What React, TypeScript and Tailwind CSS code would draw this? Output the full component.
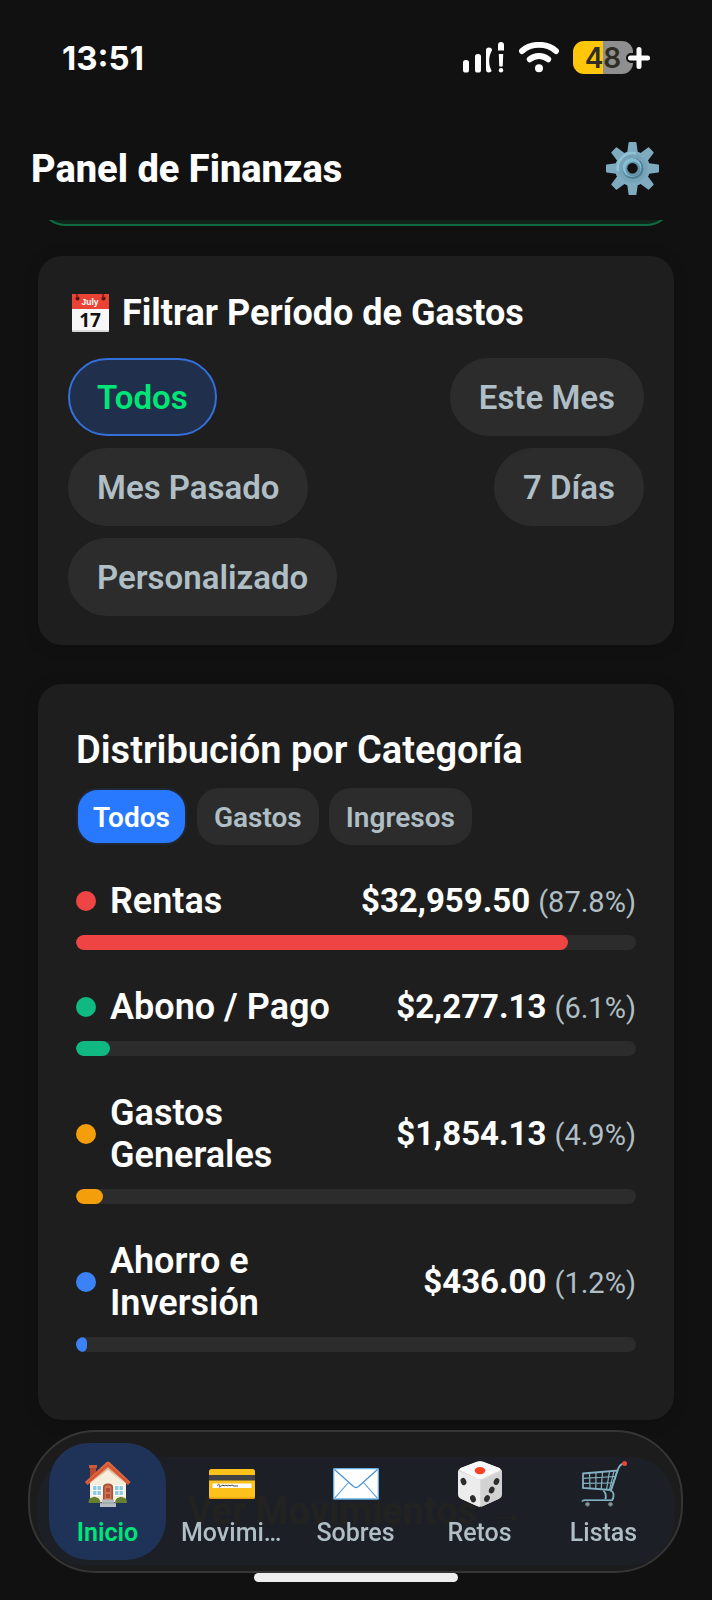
import React, { useState } from "react";

function SignalIcon() {
  return (
    <svg width="42" height="31" viewBox="0 0 42 31" fill="#fff" aria-hidden="true">
      <rect x="0" y="18" width="6" height="12.5" rx="2.6" />
      <rect x="12" y="12" width="6" height="18.5" rx="2.6" />
      <path d="M26 5.5c2 0 3 1.200 3 2.800-1.800 3.200-2.800 6.500-2.800 10.200 0 4 .6 7 2.400 10.300-.4 1-1.300 1.700-2.600 1.700-2 0-3-1-3-2.700V8.200c0-1.700 1-2.700 3-2.700z" />
      <path d="M35 3c0-2 1.200-3 3-3s3 1 3 3v5.500h-6z" />
      <path d="M35.800 12h4.400l-.4 11.500c0 .8-.8 1.200-1.800 1.200s-1.800-.4-1.800-1.200z" />
      <circle cx="38" cy="28.300" r="2.200" />
    </svg>
  );
}

function WifiIcon() {
  return (
    <svg width="40" height="31" viewBox="0 0 40 31" fill="none" stroke="#fff" strokeWidth="6" strokeLinecap="round" aria-hidden="true">
      <path d="M3 9C12.500.800 27.500.800 37 9" />
      <path d="M10.800 17.200C16 12.800 24 12.800 29.200 17.200" />
      <circle cx="20" cy="26.200" r="4" fill="#fff" stroke="none" />
    </svg>
  );
}

function BatteryIcon() {
  return (
    <svg width="78" height="33" viewBox="0 0 78 33" role="img" aria-label="Batería 48%">
      <clipPath id="battery">
        <rect width="60" height="33" rx="11" />
      </clipPath>
      <g clipPath="url(#battery)">
        <rect width="30" height="33" fill="#ffc60a" />
        <rect x="30" width="30" height="33" fill="#8f8f8f" />
      </g>
      <text x="30" y="26.500" textAnchor="middle" fontFamily="Inter, sans-serif" fontWeight="600" fontSize="28" fill="#302d25">48</text>
      <path d="M58 17h16M66 9v16" stroke="#111" strokeWidth="10" strokeLinecap="round" />
      <path d="M57.500 17h17M66 8.500v17" stroke="#fff" strokeWidth="5" strokeLinecap="round" />
    </svg>
  );
}

function GearIcon() {
  return (
    <svg width="53" height="53" viewBox="0 0 53 53" aria-hidden="true">
      <g fill="#7fabc0">
        {[0, 45, 90, 135, 180, 225, 270, 315].map((a) => (
          <path key={a} d="M22.600.6q0-.6.800-.6h6.200q.8 0 .8.600L32 12H21z" transform={`rotate(${a} 26.500 26.500)`} />
        ))}
        <circle cx="26.500" cy="26.500" r="17.500" />
      </g>
      <circle cx="27" cy="26.500" r="14.500" fill="#76a3b8" />
      <path d="M12 29a15 15 0 0 1 18-17.500" fill="none" stroke="#93c4d6" strokeWidth="2.500" />
      <circle cx="27" cy="26.500" r="10.500" fill="#4d7d93" />
      <circle cx="26" cy="25.500" r="9.500" fill="#87bdd2" />
      <circle cx="27" cy="27" r="7.500" fill="#6293a9" />
      <circle cx="26.500" cy="26.300" r="5.200" fill="#14100f" />
    </svg>
  );
}

function CalendarIcon() {
  return (
    <svg width="37" height="38" viewBox="0 0 37 38" aria-hidden="true">
      <rect width="37" height="38" rx="1.500" fill="#f7f7f7" />
      <path d="M0 15V1.500Q0 0 1.500 0h34Q37 0 37 1.500V15z" fill="#ea4335" />
      <path d="M0 36h37v.6q0 1.400-1.500 1.400h-34Q0 38 0 36.600z" fill="#d8d8d8" />
      <circle cx="5.500" cy="4.500" r="2" fill="#4a1512" />
      <circle cx="31.500" cy="4.500" r="2" fill="#4a1512" />
      <path d="M5 0v4M31 0v4" stroke="#7c211a" strokeWidth="1.500" />
      <text x="18" y="10.500" textAnchor="middle" fontFamily="Liberation Sans, sans-serif" fontWeight="700" fontSize="8.500" fill="#fff">July</text>
      <text x="18" y="33" textAnchor="middle" fontFamily="Open Sans, sans-serif" fontWeight="700" fontSize="19" fill="#111">17</text>
    </svg>
  );
}

function HouseIcon() {
  return (
    <svg width="46" height="46" viewBox="0 0 46 46" aria-hidden="true">
      <rect x="5" y="5" width="6" height="17" fill="#b4492f" />
      <rect x="4" y="4" width="8" height="3" fill="#c95b3b" />
      <path d="M5 20 23 4l18 17v20H5z" fill="#f6eddc" />
      <path d="M8 20 23 6l15 15-15-12z" fill="#d9c7ac" />
      <path d="M0 21 21.600 1q1.400-1 2.800 0L45.500 21 43 24 23 6.500 2.500 24z" fill="#e0643b" />
      <path d="M1.500 22.500 23 3.800l21 18.700" fill="none" stroke="#b8462a" strokeWidth=".8" />
      <g fill="#8ccbe0" stroke="#fff" strokeWidth="1">
        <rect x="7.500" y="24.500" width="9" height="10" />
        <rect x="29.500" y="24.500" width="9" height="10" />
      </g>
      <path d="M12 24.500v10M34 24.500v10M7.500 29.500h9M29.500 29.500h9" stroke="#fff" strokeWidth="1" />
      <path d="M18 40V26q0-3.500 5-3.500t5 3.500v14z" fill="#a94f35" />
      <path d="M19.600 39V26.500q0-2.300 3.400-2.300t3.400 2.300V39z" fill="#cf7456" />
      <path d="M21 27h4v4h-4zM21 33h4v4h-4z" fill="#a94f35" />
      <path d="M3.500 42q0-5.500 4-5.500 2-1.500 4 0 3.500.2 4 5.500zM30 42q.5-5.300 4-5.500 2-1.500 4 0 4 0 4 5.500z" fill="#65812f" />
      <path d="M17 38.500h12v3.500h2v4H15v-4h2z" fill="#b7bdc1" />
      <path d="M15 42h16" stroke="#8c9499" strokeWidth=".8" />
    </svg>
  );
}

function CardIcon() {
  return (
    <svg width="46" height="46" viewBox="0 0 46 46" aria-hidden="true">
      <rect y="8" width="46" height="30" rx="2.500" fill="#fcc21b" />
      <path d="M0 35.500q0 2.500 2.500 2.500h41Q46 38 46 35.500v-1q0 2-2.500 2h-41Q0 36.500 0 34.500z" fill="#e59b0b" />
      <rect y="14" width="46" height="5.500" fill="#424242" />
      <rect x="3.500" y="22.500" width="39" height="4.500" fill="#fff" />
      <path d="M8 24.500q2-2 3 0t-1 1.500M12 25l2-1 1 1 2-1 1 1 2-1 1 1 2-1 2 1h4" fill="none" stroke="#333" strokeWidth=".9" />
    </svg>
  );
}

function EnvelopeIcon() {
  return (
    <svg width="46" height="46" viewBox="0 0 46 46" aria-hidden="true">
      <rect x=".6" y="7.600" width="44.800" height="30.400" rx="1" fill="#fff" stroke="#64afe4" strokeWidth="1.400" />
      <path d="M1.500 37.300 15.500 21.500M44.500 37.300 30.500 21.500" stroke="#5aa0dc" strokeWidth="1.100" />
      <path d="m1.500 8.500 19 17q2.500 2 5 0l19-17" fill="none" stroke="#4c93d3" strokeWidth="1.300" />
    </svg>
  );
}

function DiceIcon() {
  return (
    <svg width="46" height="46" viewBox="0 0 46 46" aria-hidden="true">
      <path d="M20 .7q3-1 6 0l15 5.800Q45 8 45 11v22q0 3-3 4.700L26 45q-3 1.500-6 0L4 37.700Q1 36 1 33V11q0-3 4-4.500z" fill="#d9d9d9" />
      <path d="M1.300 10 23 19v26.800q-1.500 0-3-.8L4 37.700Q1 36 1 33V11z" fill="#ececec" />
      <path d="m44.800 10-20.800 9.500v26q1 0 2-.5l16-7.300q3-1.700 3-4.700V11z" fill="#d2d2d2" />
      <path d="M20 .7q3-1 6 0l15 5.800q4 1.700 1.500 3L26 17.500q-3 1.300-6 0L3.500 9.500Q1.500 8 5 6.500z" fill="#fafafa" />
      <ellipse cx="23" cy="9.600" rx="5.300" ry="3.700" fill="#fb4124" />
      <g fill="#2c2c2c">
        <ellipse cx="6.500" cy="20.500" rx="2.800" ry="3.700" transform="rotate(-20 6.500 20.500)" />
        <ellipse cx="16" cy="37.800" rx="2.800" ry="3.700" transform="rotate(-20 16 37.800)" />
        <ellipse cx="39.500" cy="20.500" rx="2.700" ry="3.600" transform="rotate(22 39.500 20.500)" />
        <ellipse cx="34.700" cy="29" rx="2.700" ry="3.600" transform="rotate(22 34.700 29)" />
        <ellipse cx="30" cy="37.500" rx="2.700" ry="3.600" transform="rotate(22 30 37.500)" />
      </g>
    </svg>
  );
}

function CartIcon() {
  return (
    <svg width="46" height="46" viewBox="0 0 46 46" fill="none" stroke="#82b1c1" aria-hidden="true">
      <path d="M2 12.500 36.500 9.500 30 29 2 27z" strokeWidth="1.800" />
      <path d="M2 17.300 34.800 15.500M2 22.300 32.800 22M8.500 12l.5 15.500M15 11.500l-.2 16.400M21.500 11l-1.300 17.300M28.500 10.500 25.500 28.600M33 10 28.500 28.800" strokeWidth="1.200" />
      <path d="M30 29 36.500 9.500Q38.500 3 43 2.300" strokeWidth="1.800" />
      <path d="M29 29.500q4 1 3.500 5.500 0 3.500-2.500 4.500M22.500 29.500q4 5 1.500 9.500M1 40.500q1-1.500 4-1.300h27" strokeWidth="1.800" />
      <path d="M4 38.500h27" stroke="#557c8c" strokeWidth=".9" />
      <circle cx="43.600" cy="2.600" r="2.500" fill="#e8443c" stroke="none" />
      <g fill="#8d989e" stroke="#5d6b72">
        <circle cx="6.500" cy="43.200" r="2" />
        <circle cx="29.500" cy="43.200" r="2" />
      </g>
    </svg>
  );
}

const periods = ["Todos", "Este Mes", "Mes Pasado", "7 Días", "Personalizado"];
const kinds = ["Todos", "Gastos", "Ingresos"];

const categories = [
  { name: "Rentas", amount: "$32,959.50", percent: 87.8, color: "bg-[#ef4444]" },
  { name: "Abono / Pago", amount: "$2,277.13", percent: 6.1, color: "bg-[#10b981]" },
  { name: "Gastos Generales", amount: "$1,854.13", percent: 4.9, color: "bg-[#f59e0b]" },
  { name: "Ahorro e Inversión", amount: "$436.00", percent: 1.2, color: "bg-[#3b82f6]" },
];

const tabs = [
  { label: "Inicio", Icon: HouseIcon },
  { label: "Movimientos", Icon: CardIcon },
  { label: "Sobres", Icon: EnvelopeIcon },
  { label: "Retos", Icon: DiceIcon },
  { label: "Listas", Icon: CartIcon },
];

export default function App() {
  const [period, setPeriod] = useState("Todos");
  const [kind, setKind] = useState("Todos");
  const [tab, setTab] = useState("Inicio");

  return (
    <div className="min-h-screen bg-[#111111] pb-8 font-[Roboto,sans-serif] text-white">
      <div className="flex h-[115px] items-center justify-between pr-[61px] pl-[62px]">
        <time className="font-[Inter,sans-serif] text-[33px] leading-10 font-bold">13:51</time>
        <div className="flex items-center gap-[14px]">
          <SignalIcon />
          <WifiIcon />
          <BatteryIcon />
        </div>
      </div>

      <header className="flex h-[105px] items-center justify-between pt-[2px] pr-[53px] pl-[31px]">
        <h1 className="text-[38px] leading-[44px] font-extrabold">Panel de Finanzas</h1>
        <button type="button" aria-label="Ajustes">
          <GearIcon />
        </button>
      </header>

      <main className="px-[38px]">
        <div className="flex h-[6px] items-end overflow-hidden" aria-hidden="true">
          <div className="h-20 w-full shrink-0 rounded-[28px] border-2 border-[#0f6b42] bg-[#10241b]" />
        </div>

        <section className="mt-[30px] rounded-[24px] bg-[#1e1e1e] px-[30px] pt-[35px] pb-[29px] shadow-[0_2px_16px_rgba(0,0,0,0.15)]">
          <h2 className="flex items-center gap-[13px] pl-1 text-[36px] leading-[44px] font-bold">
            <CalendarIcon />
            Filtrar Período de Gastos
          </h2>
          <div className="mt-[23px] flex flex-wrap justify-between gap-3">
            {periods.map((p) => (
              <button
                key={p}
                type="button"
                aria-pressed={p === period}
                onClick={() => setPeriod(p)}
                className={
                  p === period
                    ? "h-[78px] rounded-full border-2 border-[#3470dc] bg-[#202f4b] px-[27px] pt-[2px] text-[33px] font-semibold text-[#00e676]"
                    : "h-[78px] rounded-full border-2 border-[#2c2c2c] bg-[#2c2c2c] px-[27px] pt-[2px] text-[33px] font-semibold text-[#b0bec5]"
                }
              >
                {p}
              </button>
            ))}
          </div>
        </section>

        <section className="mt-[39px] rounded-[24px] bg-[#1e1e1e] px-[38px] pt-[42px] pb-[68px] shadow-[0_2px_16px_rgba(0,0,0,0.15)]">
          <h2 className="text-[38px] leading-[48px] font-semibold">Distribución por Categoría</h2>
          <div className="mt-[14px] flex gap-[10px]">
            {kinds.map((k) => (
              <button
                key={k}
                type="button"
                aria-pressed={k === kind}
                onClick={() => setKind(k)}
                className={
                  k === kind
                    ? "h-[57px] rounded-[22px] border-2 border-[#1e2736] bg-[#2979ff] px-[15px] pt-[2px] text-[28px] font-semibold text-white"
                    : "h-[57px] rounded-[22px] border-2 border-[#2c2c2c] bg-[#2c2c2c] px-[15px] pt-[2px] text-[28px] font-semibold text-[#b0bec5]"
                }
              >
                {k}
              </button>
            ))}
          </div>

          <ul className="mt-[35px] flex flex-col gap-9">
            {categories.map((c) => (
              <li key={c.name}>
                <div className="flex items-center justify-between gap-6">
                  <div className="flex items-center gap-[14px]">
                    <span className={`size-5 shrink-0 rounded-full ${c.color}`} />
                    <span className="text-[36px] leading-[42px] font-semibold">{c.name}</span>
                  </div>
                  <p className="flex shrink-0 items-baseline gap-2 text-[33px] leading-[38px] font-bold">
                    {c.amount}
                    <span className="text-[29px] leading-8 font-normal text-[#b0bec5]">({c.percent}%)</span>
                  </p>
                </div>
                <div className="mt-[13px] h-[15px] overflow-hidden rounded-full bg-[#2c2c2c]">
                  <div className={`h-full rounded-full ${c.color}`} style={{ width: `${Math.max(c.percent, 2)}%` }} />
                </div>
              </li>
            ))}
          </ul>
        </section>

        <a
          href="#movimientos"
          className="mt-[37px] flex h-[108px] items-center justify-center rounded-[44px] bg-[#0c2c66] text-[38px] font-bold text-[#4a4a3c]"
        >
          Ver Movimientos →
        </a>
      </main>

      <div className="fixed inset-x-0 bottom-[18px] flex flex-col items-center pr-[29px] pl-[28px]">
        <nav className="flex w-full gap-[7px] rounded-[68px] border-2 border-[#353535] bg-[#1e1e1ee6] px-[19px] py-[11px]">
          {tabs.map(({ label, Icon }) => (
            <button
              key={label}
              type="button"
              aria-current={label === tab ? "page" : undefined}
              onClick={() => setTab(label)}
              className={
                label === tab
                  ? "flex h-[117px] min-w-0 flex-1 flex-col items-center gap-3 rounded-[40px] bg-[#1f3358] px-2 pt-[18px] text-[#00e676]"
                  : "flex h-[117px] min-w-0 flex-1 flex-col items-center gap-3 rounded-[40px] px-2 pt-[18px] text-[#b0bec5]"
              }
            >
              <Icon />
              <span className={label === tab ? "w-full truncate text-[25px] leading-7 font-semibold" : "w-full truncate text-[25px] leading-7 font-medium"}>{label}</span>
            </button>
          ))}
        </nav>
        <div className="h-[9px] w-[204px] rounded-full bg-[#eeeeee]" />
      </div>
    </div>
  );
}
